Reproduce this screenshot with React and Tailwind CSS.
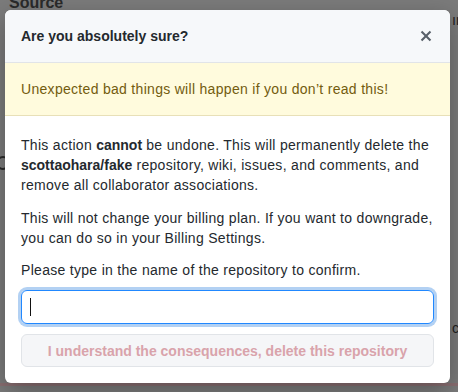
export default function App() {
  return (
    <div
      className="relative w-[458px] h-[392px] overflow-hidden bg-[#7b7b7b]"
      style={{ fontFamily: '"Liberation Sans", Arial, sans-serif' }}
    >
      {/* dimmed page behind the dialog */}
      <div className="absolute left-[9px] top-[-9px] text-[16px] font-bold text-[#2a2a2a]">Source</div>
      <div className="absolute left-[452px] top-[10px] text-[14px] text-[#1e1e1e]">ır</div>
      <div className="absolute left-[-4px] top-[156px] w-[14px] h-[14px] rounded-full border-2 border-[#2a2a2a]" />
      <div className="absolute left-[452px] top-[318px] text-[14px] text-[#1e1e1e]">c</div>
      <div className="absolute left-0 right-0 top-[383px] h-[3px] bg-[#8a6f72]" />

      <div className="relative ml-[5px] mt-[10px] w-[445px] rounded-[6px] bg-white shadow-[0_8px_24px_rgba(0,0,0,0.3)] overflow-hidden">
        <div className="flex items-center justify-between bg-[#f6f8fa] border-b border-[#e1e4e8] px-4 py-4">
          <h3 className="text-[14px] leading-[20px] font-bold text-[#24292e]">Are you absolutely sure?</h3>
          <svg width="12" height="16" viewBox="0 0 12 16" className="mr-[2px] text-[#586069]" fill="currentColor">
            <path fillRule="evenodd" d="M7.48 8l3.75 3.75-1.48 1.48L6 9.48l-3.75 3.75-1.48-1.48L4.52 8 .77 4.25l1.48-1.48L6 6.52l3.75-3.75 1.48 1.48L7.48 8z" />
          </svg>
        </div>

        <div className="bg-[#fffbdd] border-b border-[#e8e0b8] px-4 py-4 text-[14px] leading-[20px] tracking-[0.3px] text-[#735c0f]">
          Unexpected bad things will happen if you don’t read this!
        </div>

        <div className="flex flex-col px-4 pt-[19px] pb-4 text-[14px] leading-[20px] tracking-[0.3px] text-[#24292e]">
          <p>
            This action <strong className="font-bold tracking-normal">cannot</strong> be undone. This will permanently delete the{' '}
            <strong className="font-bold tracking-normal">scottaohara/fake</strong> repository, wiki, issues, and comments, and
            remove all collaborator associations.
          </p>
          <p className="mt-[13px]">
            This will not change your billing plan. If you want to downgrade, you can do so in your Billing Settings.
          </p>
          <p className="mt-[12px]">Please type in the name of the repository to confirm.</p>

          <div className="mt-[10px] h-[34px] rounded-[6px] border border-[#2188ff] shadow-[0_0_0_3px_rgba(3,102,214,0.3)] flex items-center px-[8px]">
            <span className="w-px h-[18px] bg-[#111]" />
          </div>

          <button className="mt-[10px] w-full h-[33px] rounded-[6px] border border-[#e1e4e8] bg-[#f5f6f8] text-[14px] font-bold tracking-normal text-[#d9a3ab]">
            I understand the consequences, delete this repository
          </button>
        </div>
      </div>
    </div>
  );
}
